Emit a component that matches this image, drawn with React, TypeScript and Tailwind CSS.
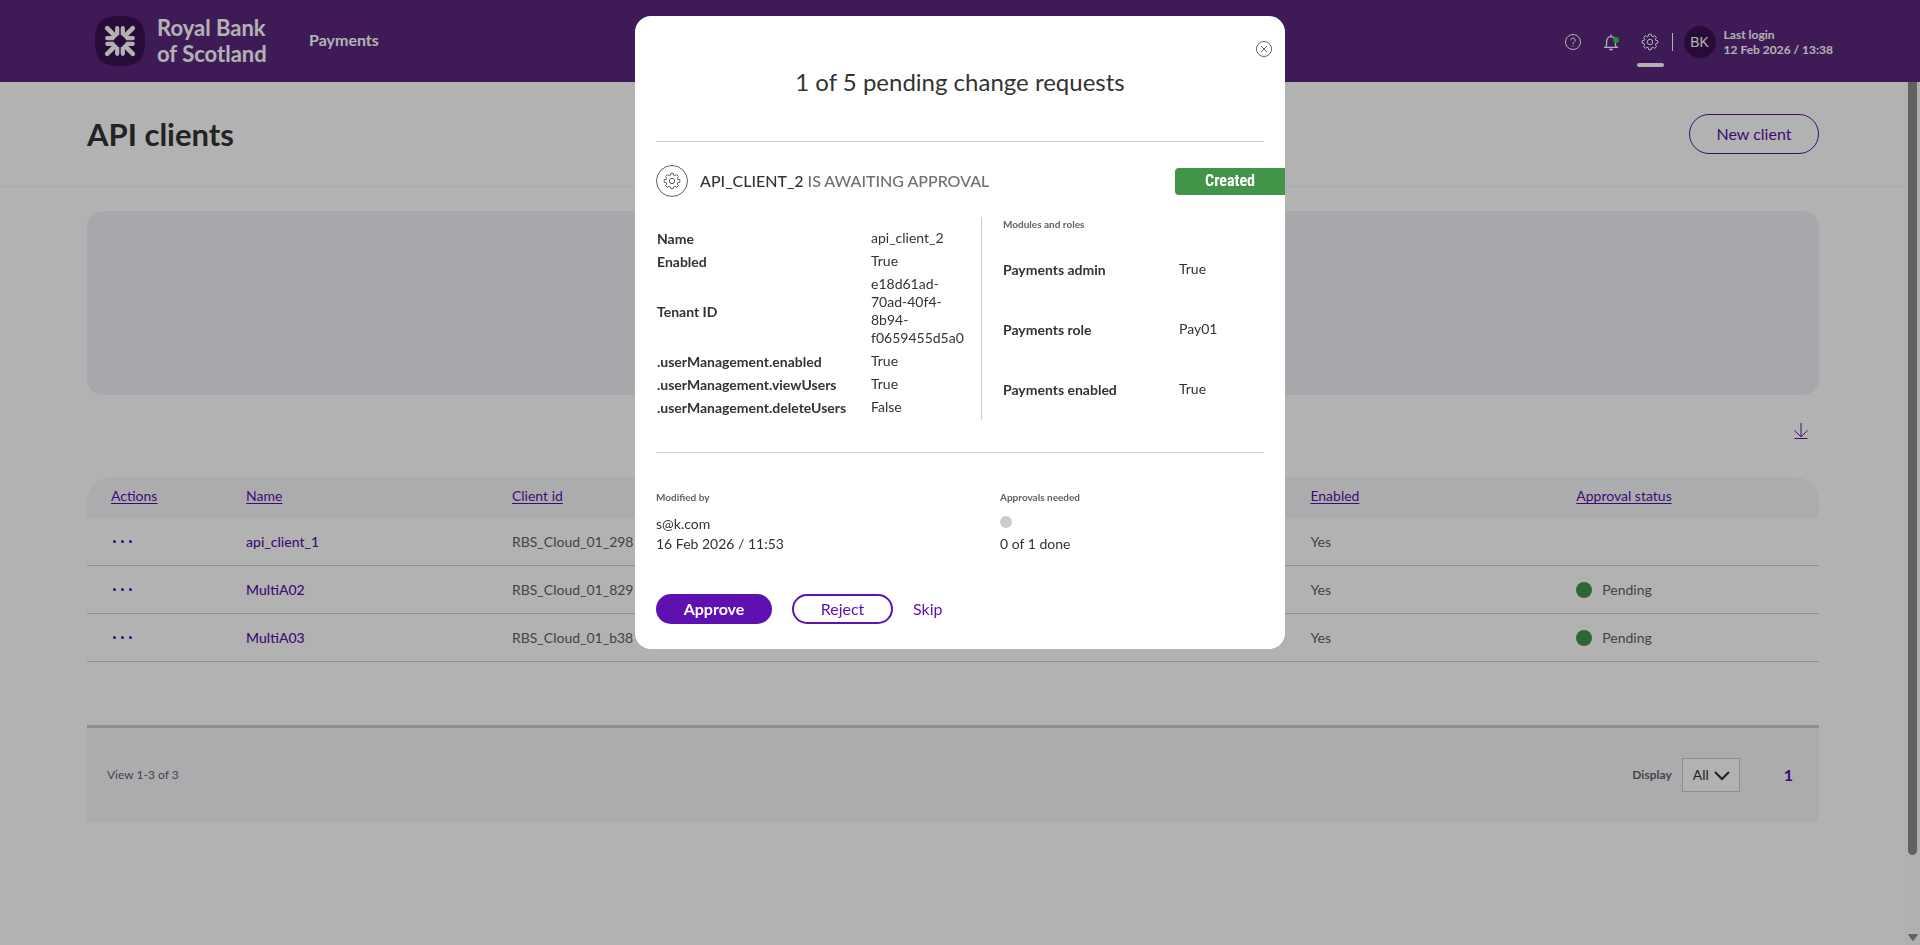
import React from "react";

const CLIENTS = [
  { name: "api_client_1", clientId: "RBS_Cloud_01_298", enabled: "Yes", status: "" },
  { name: "MultiA02", clientId: "RBS_Cloud_01_829", enabled: "Yes", status: "Pending" },
  { name: "MultiA03", clientId: "RBS_Cloud_01_b38", enabled: "Yes", status: "Pending" },
];

const DETAILS = [
  ["Name", "api_client_2"],
  ["Enabled", "True"],
  ["Tenant ID", "e18d61ad-70ad-40f4-8b94-f0659455d5a0"],
  [".userManagement.enabled", "True"],
  [".userManagement.viewUsers", "True"],
  [".userManagement.deleteUsers", "False"],
];

const ROLES = [
  ["Payments admin", "True"],
  ["Payments role", "Pay01"],
  ["Payments enabled", "True"],
];

function LogoMark() {
  return (
    <svg viewBox="0 0 50 50" className="size-[50px]" aria-hidden="true">
      <path d="M25 0C44 0 50 6 50 25S44 50 25 50 0 44 0 25 6 0 25 0Z" fill="#3c1053" />
      {[0, 90, 180, 270].map((angle) => (
        <g key={angle} transform={`rotate(${angle} 25 25)`} stroke="#fff" strokeLinecap="round">
          <path d="M12.200 12.200l9 9" strokeWidth="4.600" />
          <path d="M22.200 12.200v8M12.200 22.200h8" strokeWidth="4.200" />
        </g>
      ))}
      <path d="M25 18.600l2 .8 3.600 3.600.8 2-.8 2-3.600 3.600-2 .8-2-.8-3.600-3.600-.8-2 .8-2 3.600-3.600Z" fill="#3c1053" />
    </svg>
  );
}

function GearIcon({ className }: { className: string }) {
  return (
    <svg viewBox="0 0 18 18" className={className} fill="none" stroke="currentColor" strokeWidth="1" aria-hidden="true">
      <circle cx="9" cy="9" r="2.700" />
      <path
        strokeLinejoin="round"
        d="M7.300 3.300l.4-2h2.600l.4 2 1.200.5 1.800-1.200 1.800 1.800-1.200 1.700.5 1.300 2 .4v2.400l-2 .4-.5 1.300 1.200 1.700-1.800 1.800-1.800-1.200-1.200.5-.4 2H7.700l-.4-2-1.200-.5-1.800 1.200-1.800-1.800 1.200-1.700-.5-1.300-2-.4V7.800l2-.4.5-1.300-1.200-1.700 1.800-1.800 1.800 1.200Z"
      />
    </svg>
  );
}

function Header() {
  return (
    <header className="flex h-[82px] w-full items-center justify-between bg-[#5a287d] pl-[95px] pr-[87px] text-white">
      <div className="flex items-center">
        <a href="#home" className="flex items-center gap-3" aria-label="Royal Bank of Scotland">
          <LogoMark />
          <span className="w-[108px] whitespace-nowrap text-[22px] font-bold leading-[26px]">
            Royal Bank
            <br />
            of Scotland
          </span>
        </a>
        <nav className="ml-11 pb-0.5">
          <a href="#payments" className="text-base font-bold">
            Payments
          </a>
        </nav>
      </div>
      <div className="flex items-center pt-0.5">
        <button aria-label="Help" className="mr-[22px]">
          <svg viewBox="0 0 16 16" className="size-4" fill="none" stroke="currentColor" aria-hidden="true">
            <circle cx="8" cy="8" r="7.500" />
            <path d="M5.800 6.300a2.200 2.200 0 1 1 3.400 1.800C8.400 8.600 8 9 8 10" />
            <path d="M8 11.300v1.200" />
          </svg>
        </button>
        <button aria-label="Notifications" className="relative mr-[22px]">
          <svg viewBox="0 0 16 18" className="h-[18px] w-4" fill="none" stroke="currentColor" strokeWidth="1.300" aria-hidden="true">
            <path d="M1 14.300h14M3 14c.6-1.500.7-2.500.7-6a4.300 4.300 0 0 1 8.600 0c0 3.500.1 4.500.7 6M8 3.500V1.500" />
            <path d="M6.200 16.500h3.600" strokeWidth="1.600" />
          </svg>
          <span className="absolute right-0 top-1 size-1.5 rounded-full bg-[#33cc44]" />
        </button>
        <button aria-label="Settings" className="relative">
          <GearIcon className="size-[18px]" />
          <span className="absolute -left-1 top-[30px] h-1 w-[27px] rounded-sm bg-white" />
        </button>
        <span className="ml-[13px] h-[18px] w-px bg-white" />
        <span className="ml-[11px] flex size-8 items-center justify-center rounded-full bg-[#3c1053] font-['Liberation_Sans',sans-serif] text-sm">
          BK
        </span>
        <p className="ml-2 text-xs font-bold leading-[15px]">
          Last login
          <br />
          12 Feb 2026 / 13:38
        </p>
      </div>
    </header>
  );
}

function ClientTable() {
  const head = "pb-[3px] pl-6 text-left font-normal";
  return (
    <table className="w-full table-fixed border-separate border-spacing-0 text-sm text-[#646068]">
      <colgroup>
        <col className="w-[7.8%]" />
        <col className="w-[15.35%]" />
        <col className="w-[46.1%]" />
        <col className="w-[15.35%]" />
        <col />
      </colgroup>
      <thead>
        <tr className="h-[41px] bg-[#f7f7fb] text-[#5a10a8]">
          <th className={`${head} rounded-tl-3xl`}><a href="#actions" className="underline underline-offset-2">Actions</a></th>
          <th className={head}><a href="#name" className="underline underline-offset-2">Name</a></th>
          <th className={head}><a href="#client-id" className="underline underline-offset-2">Client id</a></th>
          <th className={head}><a href="#enabled" className="underline underline-offset-2">Enabled</a></th>
          <th className={`${head} rounded-tr-3xl`}><a href="#status" className="underline underline-offset-2">Approval status</a></th>
        </tr>
      </thead>
      <tbody>
        {CLIENTS.map((c) => (
          <tr key={c.name} className="h-12">
            <td className="border-b border-[#cccccc] pl-[26px]">
              <button aria-label={`Actions for ${c.name}`} className="flex gap-[5px] text-[#5a10a8]">
                <span className="size-[3px] rounded-full bg-current" />
                <span className="size-[3px] rounded-full bg-current" />
                <span className="size-[3px] rounded-full bg-current" />
              </button>
            </td>
            <td className="border-b border-[#cccccc] pl-6 font-medium text-[#5a10a8]">
              <a href={`#${c.name}`}>{c.name}</a>
            </td>
            <td className="border-b border-[#cccccc] pl-6">{c.clientId}</td>
            <td className="border-b border-[#cccccc] pl-6">{c.enabled}</td>
            <td className="border-b border-[#cccccc] pl-6">
              {c.status && (
                <span className="flex items-center gap-2.5">
                  <span className="size-4 rounded-full bg-[#429448]" />
                  {c.status}
                </span>
              )}
            </td>
          </tr>
        ))}
      </tbody>
    </table>
  );
}

function Scrollbar() {
  return (
    <div className="flex w-[15px] flex-col items-center justify-between bg-[#fcfcfc] pb-1" aria-hidden="true">
      <div className="h-[90%] w-[9px] rounded-b-full bg-[#8b8b8b]" />
      <svg viewBox="0 0 10 7" className="h-[7px] w-[10px]" fill="#8b8b8b">
        <path d="M1 0h8q1 0 .6 1L5.700 6.500q-.7.800-1.400 0L.4 1Q0 0 1 0Z" />
      </svg>
    </div>
  );
}

function RequestDialog() {
  return (
    <div className="fixed inset-0 flex items-start justify-center bg-black/30 pt-4">
      <section role="dialog" aria-modal="true" aria-labelledby="dialog-title" className="w-[650px] overflow-hidden rounded-2xl bg-white px-[21px] pb-[25px] text-[#333333]">
        <div className="-mr-2 flex justify-end pt-[25px]">
          <button aria-label="Close" className="text-[#646068]">
            <svg viewBox="0 0 16 16" className="size-4" fill="none" stroke="currentColor" aria-hidden="true">
              <circle cx="8" cy="8" r="7.500" />
              <path d="M5 5l6 6M11 5l-6 6" />
            </svg>
          </button>
        </div>
        <h2 id="dialog-title" className="mt-[9px] text-center text-2xl">
          1 of 5 pending change requests
        </h2>
        <hr className="mt-[43px] border-[#cccccc]" />

        <div className="-mr-[21px] mt-[23px] flex items-center">
          <span className="flex size-8 items-center justify-center rounded-full border border-[#646068] text-[#646068]">
            <GearIcon className="size-[18px]" />
          </span>
          <h3 className="ml-3 flex-1 text-base font-medium text-[#6f6f6f]">
            <span className="text-[#333333]">API_CLIENT_2</span> IS AWAITING APPROVAL
          </h3>
          <span className="flex h-[27px] w-[110px] items-center justify-center rounded-l bg-[#429448] font-['Roboto_Condensed','Liberation_Sans_Narrow','Roboto',sans-serif] text-base font-bold text-white">
            Created
          </span>
        </div>

        <div className="mt-5 flex text-sm">
          <div className="w-[326px] border-r border-[#cccccc] pb-px pl-px pt-2.5">
            <table className="w-full table-fixed leading-[18px]">
              <colgroup>
                <col className="w-[214px]" />
                <col />
              </colgroup>
              <tbody>
                {DETAILS.map(([label, value]) => (
                  <tr key={label}>
                    <th scope="row" className="text-left font-bold">{label}</th>
                    <td className="pb-[3px] pr-4 pt-0.5">{value}</td>
                  </tr>
                ))}
              </tbody>
            </table>
          </div>
          <div className="flex-1 pl-[21px]">
            <h4 className="text-[10px] font-bold leading-[14px] text-[#646068]">Modules and roles</h4>
            <table className="mt-2 w-full table-fixed leading-[18px]">
              <colgroup>
                <col className="w-44" />
                <col />
              </colgroup>
              <tbody>
                {ROLES.map(([label, value]) => (
                  <tr key={label} className="h-[60px]">
                    <th scope="row" className="pt-0.5 text-left font-bold">{label}</th>
                    <td>{value}</td>
                  </tr>
                ))}
              </tbody>
            </table>
          </div>
        </div>

        <hr className="mt-8 border-[#cccccc]" />

        <div className="mt-9 flex text-sm leading-5">
          <div className="w-[344px]">
            <h4 className="text-[10px] font-bold leading-4 text-[#646068]">Modified by</h4>
            <p className="mt-[9px]">
              s@k.com
              <br />
              16 Feb 2026 / 11:53
            </p>
          </div>
          <div>
            <h4 className="text-[10px] font-bold leading-4 text-[#646068]">Approvals needed</h4>
            <div className="mt-[9px] flex h-5 items-start pt-0.5">
              <span className="size-3 rounded-full bg-[#cccccc]" />
            </div>
            <p>0 of 1 done</p>
          </div>
        </div>

        <div className="mt-10 flex items-center gap-5">
          <button className="h-[30px] w-[116px] rounded-full bg-[#5e10b1] font-bold text-white">Approve</button>
          <button className="h-[30px] w-[101px] rounded-full border-2 border-[#5e10b1] text-[#5e10b1]">Reject</button>
          <button className="text-[#5e10b1]">Skip</button>
        </div>
      </section>
    </div>
  );
}

export default function App() {
  return (
    <div className="flex min-h-screen flex-col bg-white font-['Lato',sans-serif]">
      <Header />
      <div className="flex flex-1">
        <main className="min-w-0 flex-1">
          <div className="flex h-[105px] items-center justify-between border-b border-[#f2f2f2] pl-[87px] pr-[86px]">
            <h1 className="text-[31px] font-bold text-[#333333]">API clients</h1>
            <button className="h-10 w-[130px] rounded-full border border-[#5a10a8] text-[#5a10a8]">New client</button>
          </div>
          <div className="pl-[87px] pr-[86px] pt-6">
            <div className="h-[184px] rounded-2xl bg-[#f0eff7]" />
            <div className="flex h-[82px] items-center justify-end pb-2.5 pr-[11px]">
              <button aria-label="Download" className="text-[#5a10a8]">
                <svg viewBox="0 0 14 16" className="h-4 w-3.5" fill="none" stroke="currentColor" aria-hidden="true">
                  <path d="M7 0v13.500M.5 7.500 7 13.800l6.500-6.300" />
                  <path d="M.5 15.500h13" />
                </svg>
              </button>
            </div>
            <ClientTable />
            <div className="mt-[63px] flex h-[97px] items-center justify-between border-t-[3px] border-[#cccccc] bg-[#f7f7fb] pl-5 pr-[26px] text-xs text-[#646068]">
              <p>View 1-3 of 3</p>
              <div className="flex items-center">
                <label htmlFor="page-size" className="mr-2.5 font-bold">Display</label>
                <div className="relative">
                  <select id="page-size" className="h-[34px] w-[58px] appearance-none border border-[#cccccc] bg-white pl-2.5 text-sm text-[#333333]">
                    <option>All</option>
                  </select>
                  <svg viewBox="0 0 16 10" className="pointer-events-none absolute right-2.5 top-[13px] h-2.5 w-4" fill="none" stroke="#333333" strokeWidth="2" aria-hidden="true">
                    <path d="M1 1l7 7 7-7" />
                  </svg>
                </div>
                <a href="#page-1" className="ml-11 text-base font-bold text-[#5a10a8]">1</a>
              </div>
            </div>
          </div>
        </main>
        <Scrollbar />
      </div>
      <RequestDialog />
    </div>
  );
}
